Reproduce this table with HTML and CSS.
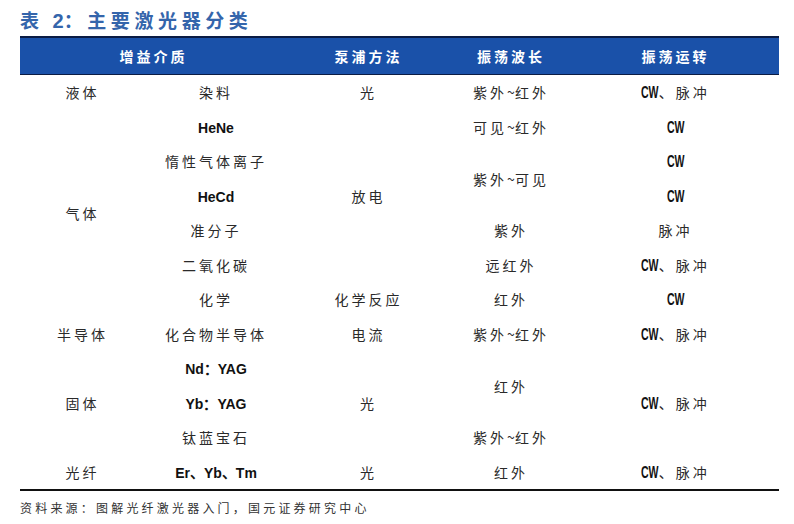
FILE: index.html
```html
<!DOCTYPE html>
<html lang="zh-CN">
<head>
<meta charset="utf-8">
<title>表 2：主要激光器分类</title>
<link rel="stylesheet" href="styles.css">
</head>
<body>
<div class="page">
  <h1 class="title">表 <span class="num">2</span>：主要激光器分类</h1>
  <table class="laser">
    <colgroup>
      <col class="c1"><col class="c2"><col class="c3"><col class="c4"><col class="c5">
    </colgroup>
    <thead>
      <tr><th colspan="2">增益介质</th><th>泵浦方法</th><th>振荡波长</th><th>振荡运转</th></tr>
    </thead>
    <tbody>
      <tr><td>液体</td><td>染料</td><td>光</td><td>紫外<span class="t">~</span>红外</td><td><span class="cw">CW</span>、脉冲</td></tr>
      <tr><td rowspan="6">气体</td><td><span class="lat">HeNe</span></td><td rowspan="5">放电</td><td>可见<span class="t">~</span>红外</td><td><span class="cw">CW</span></td></tr>
      <tr><td>惰性气体离子</td><td rowspan="2">紫外<span class="t">~</span>可见</td><td><span class="cw">CW</span></td></tr>
      <tr><td><span class="lat">HeCd</span></td><td><span class="cw">CW</span></td></tr>
      <tr><td>准分子</td><td>紫外</td><td>脉冲</td></tr>
      <tr><td>二氧化碳</td><td>远红外</td><td><span class="cw">CW</span>、脉冲</td></tr>
      <tr><td>化学</td><td>化学反应</td><td>红外</td><td><span class="cw">CW</span></td></tr>
      <tr><td>半导体</td><td>化合物半导体</td><td>电流</td><td>紫外<span class="t">~</span>红外</td><td><span class="cw">CW</span>、脉冲</td></tr>
      <tr><td rowspan="3">固体</td><td><span class="lat">Nd：YAG</span></td><td rowspan="3">光</td><td rowspan="2">红外</td><td rowspan="3"><span class="cw">CW</span>、脉冲</td></tr>
      <tr><td><span class="lat">Yb：YAG</span></td></tr>
      <tr><td>钛蓝宝石</td><td>紫外<span class="t">~</span>红外</td></tr>
      <tr class="last"><td>光纤</td><td><span class="lat">Er、Yb、Tm</span></td><td>光</td><td>红外</td><td><span class="cw">CW</span>、脉冲</td></tr>
    </tbody>
  </table>
  <p class="source">资料来源：图解光纤激光器入门，国元证券研究中心</p>
</div>
</body>
</html>
```

FILE: styles.css
```css
html, body {
  margin: 0;
  padding: 0;
  background: #ffffff;
}

.page {
  padding: 6px 15px 0 20px;
  font-family: "Noto Sans CJK SC", "Liberation Sans", sans-serif;
  color: #2a2a2a;
}

.title {
  margin: 0;
  height: 30px;
  line-height: 28px;
  font-size: 19px;
  font-weight: 700;
  letter-spacing: 4.6px;
  color: #3465ab;
}

.title .num {
  font-family: "Liberation Sans", sans-serif;
  font-weight: 700;
  font-size: 20px;
  letter-spacing: 0;
}

.laser {
  width: 759px;
  border-collapse: collapse;
  table-layout: fixed;
}

.c1 { width: 125px; }
.c2 { width: 142px; }
.c3 { width: 163px; }
.c4 { width: 122px; }
.c5 { width: 207px; }

.laser th {
  height: 36px;
  padding: 0;
  background: #1a51a9;
  color: #ffffff;
  font-size: 14px;
  font-weight: 700;
  letter-spacing: 3px;
  text-align: center;
  border-top: 2px solid #0b1c44;
  border-bottom: 1px solid #0b1c44;
}

.laser td {
  height: 34.5px;
  padding: 0;
  text-align: center;
  vertical-align: middle;
  font-size: 14px;
  letter-spacing: 3px;
  color: #2a2a2a;
}

.laser tr.last td {
  border-bottom: 2px solid #111111;
}

.lat {
  font-family: "Liberation Sans", sans-serif;
  font-weight: 700;
  letter-spacing: 0;
  font-size: 14px;
  color: #111;
}

.cw {
  display: inline-block;
  font-family: "Liberation Sans", sans-serif;
  font-weight: 700;
  font-size: 16.5px;
  line-height: 1;
  letter-spacing: 0;
  color: #111;
  transform: scaleX(0.64);
  margin: 0 -4.9px;
}

.t {
  letter-spacing: 0;
}

.source {
  margin: 8px 0 0 0;
  font-size: 12px;
  letter-spacing: 3.2px;
  color: #333333;
}
```
